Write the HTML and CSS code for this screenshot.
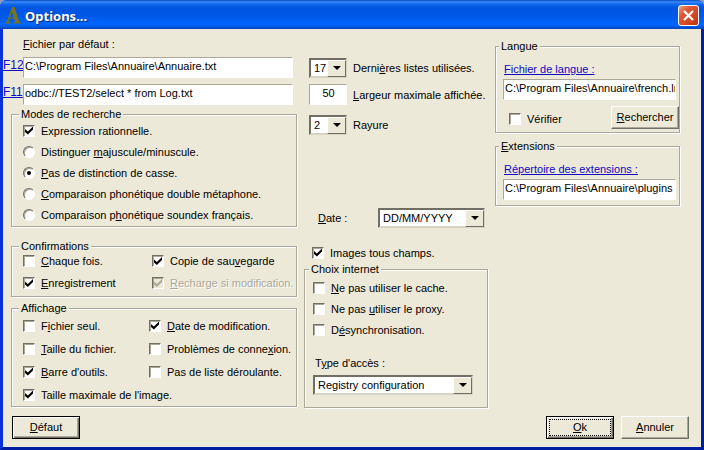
FILE: index.html
```html
<!DOCTYPE html>
<html lang="fr">
<head>
<meta charset="utf-8">
<title>Options...</title>
<link rel="stylesheet" href="styles.css">
</head>
<body>
<form class="window">
  <header class="titlebar">
    <svg class="logo" viewBox="0 0 16 17" aria-hidden="true">
      <path fill="#77731c" fill-rule="evenodd" d="M7 0h2.500l4.500 14c.3 1 .8 1.500 2 1.500v1H8.500v-1c1.300 0 1.600-.4 1.300-1.500L9 11.500H4.600L4 13.600c-.3 1.200.2 1.900 1.600 1.900v1H0v-1c1.300-.2 1.900-.8 2.400-2.200zM6.800 4.500l-1.800 6h3.700z"/>
    </svg>
    <h1 class="title">Options...</h1>
    <button class="close" type="button" aria-label="Fermer">
      <svg viewBox="0 0 13 13" aria-hidden="true"><path d="M2 2l9 9M11 2l-9 9" stroke="#fff" stroke-width="2.200"/></svg>
    </button>
  </header>

  <main class="columns">
    <section class="col-left">
      <label class="file-label" for="f12"><u>F</u>ichier par défaut :</label>
      <div class="file-row"><a class="key" href="#f12">F12</a><input class="field" id="f12" type="text" value="C:\Program Files\Annuaire\Annuaire.txt"></div>
      <div class="file-row"><a class="key" href="#f11">F11</a><input class="field" id="f11" type="text" aria-label="Source F11" value="odbc://TEST2/select * from Log.txt"></div>

      <fieldset class="group modes">
        <legend>Modes de recherche</legend>
        <label class="option"><input type="checkbox" checked><span>Expression rationnelle.</span></label>
        <label class="option"><input type="radio" name="mode"><span>Distinguer <u>m</u>ajuscule/minuscule.</span></label>
        <label class="option"><input type="radio" name="mode" checked><span><u>P</u>as de distinction de casse.</span></label>
        <label class="option"><input type="radio" name="mode"><span><u>C</u>omparaison phonétique double métaphone.</span></label>
        <label class="option"><input type="radio" name="mode"><span>Comparaison p<u>h</u>onétique soundex français.</span></label>
      </fieldset>

      <fieldset class="group confirmations">
        <legend>Confirmations</legend>
        <div class="pair">
          <label class="option"><input type="checkbox"><span><u>C</u>haque fois.</span></label>
          <label class="option"><input type="checkbox" checked><span>Copie de sau<u>v</u>egarde</span></label>
          <label class="option"><input type="checkbox" checked><span><u>E</u>nregistrement</span></label>
          <label class="option disabled"><input type="checkbox" checked disabled><span><u>R</u>echarge si modification.</span></label>
        </div>
      </fieldset>

      <fieldset class="group display">
        <legend>Affichage</legend>
        <div class="pair">
          <label class="option"><input type="checkbox"><span>F<u>i</u>chier seul.</span></label>
          <label class="option"><input type="checkbox" checked><span><u>D</u>ate de modification.</span></label>
          <label class="option"><input type="checkbox"><span><u>T</u>aille du fichier.</span></label>
          <label class="option"><input type="checkbox"><span>Problèmes de conne<u>x</u>ion.</span></label>
          <label class="option"><input type="checkbox" checked><span><u>B</u>arre d'outils.</span></label>
          <label class="option"><input type="checkbox"><span>Pas de liste déroulante.</span></label>
          <label class="option"><input type="checkbox" checked><span>Taille maximale de l'image.</span></label>
        </div>
      </fieldset>
    </section>

    <section class="col-middle">
      <div class="setting"><span class="drop"><select id="lists"><option>17</option></select></span><label for="lists">Derni<u>è</u>res listes utilisées.</label></div>
      <div class="setting"><input class="field number" id="width" type="text" value="50"><label for="width"><u>L</u>argeur maximale affichée.</label></div>
      <div class="setting stripe"><span class="drop"><select id="stripe"><option>2</option></select></span><label for="stripe">Rayure</label></div>

      <div class="date"><label for="date"><u>D</u>ate :</label><span class="drop"><select id="date"><option>DD/MM/YYYY</option></select></span></div>
      <label class="option images"><input type="checkbox" checked><span>Images tous champs.</span></label>

      <fieldset class="group internet">
        <legend>Choix internet</legend>
        <label class="option"><input type="checkbox"><span><u>N</u>e pas utiliser le cache.</span></label>
        <label class="option"><input type="checkbox"><span>Ne pas <u>u</u>tiliser le proxy.</span></label>
        <label class="option"><input type="checkbox"><span>D<u>é</u>synchronisation.</span></label>
        <label class="access" for="access">T<u>y</u>pe d'accès :</label>
        <span class="drop"><select id="access"><option>Registry configuration</option></select></span>
      </fieldset>
    </section>

    <section class="col-right">
      <fieldset class="group path language">
        <legend>Langue</legend>
        <a class="path-link" href="#lang">Fichier de langue :</a>
        <input class="field" id="lang" type="text" aria-label="Fichier de langue" value="C:\Program Files\Annuaire\french.lng">
        <div class="verify">
          <label class="option"><input type="checkbox"><span>Vérifier</span></label>
          <button class="button" type="button"><span><u>R</u>echercher</span></button>
        </div>
      </fieldset>
      <fieldset class="group path">
        <legend><u>E</u>xtensions</legend>
        <a class="path-link" href="#ext">Répertoire des extensions :</a>
        <input class="field" id="ext" type="text" aria-label="Répertoire des extensions" value="C:\Program Files\Annuaire\plugins">
      </fieldset>
    </section>
  </main>

  <footer class="actions">
    <button class="button framed reset" type="button"><span><u>D</u>éfaut</span></button>
    <button class="button framed focused" type="button"><span><u>O</u>k</span></button>
    <button class="button" type="button"><span><u>A</u>nnuler</span></button>
  </footer>
</form>
</body>
</html>
```
FILE: styles.css
```css
:root {
  --face: #ece9d8;
  --shade: #aca899;
  --dark: #716f64;
  --link: #1008c0;
}

* { box-sizing: border-box; }

body {
  margin: 0;
  background: #8f9cc0;
  color: #000;
  font: 11px/14px "Liberation Sans", Arial, sans-serif;
}

input, select, button { font: inherit; color: inherit; margin: 0; }
label, legend, a { white-space: nowrap; }

.window {
  display: flex;
  flex-direction: column;
  min-height: 100vh;
  border: 3px solid #0831d9;
  border-top: 0;
  border-right-color: #001ea0;
  border-bottom-color: #001ea0;
  border-radius: 7px 7px 0 0;
  background: var(--face);
}

/* Title bar */
.titlebar {
  display: flex;
  align-items: center;
  height: 29px;
  margin: 0 -3px;
  padding: 2px 5px 0;
  border-radius: 7px 7px 0 0;
  background: linear-gradient(#0a48c8 0, #3a8cf8 2px, #1268f0 4px, #0054e0 8px, #0058e8 16px, #0066fc 24px, #0060f0 26px, #0040b8 29px);
}
.logo { width: 16px; height: 17px; }
.title {
  flex: 1;
  margin: 0 0 0 4px;
  color: #fff;
  font: bold 13px/18px "Noto Sans", "Open Sans", sans-serif;
  text-shadow: 1px 1px 0 #0a2a80;
}
.close {
  display: grid;
  place-items: center;
  width: 21px;
  height: 21px;
  padding: 0;
  border: 1px solid #fff;
  border-radius: 3px;
  background: linear-gradient(135deg, #f0a088 0, #e0583a 30%, #d0421c 75%, #b83410 100%);
}
.close svg { width: 13px; height: 13px; }

/* Columns */
.columns {
  display: grid;
  grid-template-columns: 294fr 184fr 185fr;
  column-gap: 7px;
  flex: 1;
  padding-right: 21px;
}

/* Groups */
.group {
  min-width: 0;
  margin: 0;
  padding: 0 0 0 11px;
  border: 1px solid var(--shade);
  box-shadow: 1px 1px 0 #fff, inset 1px 1px 0 #fff;
}
.group legend {
  margin-left: -4px;
  padding: 0 2px;
  background: var(--face);
  line-height: 12px;
}

/* Check boxes and radios */
.option {
  display: flex;
  align-items: center;
  gap: 6px;
  height: 21px;
}
.option input {
  appearance: none;
  display: grid;
  place-items: center;
  flex: none;
  width: 12px;
  height: 12px;
  border: 1px solid;
  border-color: var(--dark) #fff #fff var(--dark);
  background: #fff;
  box-shadow: inset 1px 1px 0 var(--shade);
}
.option input[type="radio"] { border-radius: 50%; }
.option input[type="checkbox"]:checked::before {
  content: "";
  width: 8px;
  height: 8px;
  background: #000;
  clip-path: polygon(0 30%, 36% 62%, 100% 0, 100% 38%, 36% 100%, 0 68%);
}
.option input[type="radio"]:checked::before {
  content: "";
  width: 4px;
  height: 4px;
  border-radius: 50%;
  background: #000;
}
.disabled { color: var(--shade); text-shadow: 1px 1px 0 #fff; }
.option input:disabled { background: var(--face); }
.option input[type="checkbox"]:disabled::before { background: var(--shade); }

/* Text boxes */
.field {
  width: 100%;
  min-width: 0;
  height: 21px;
  padding: 0 0 3px 1px;
  border: 1px solid;
  border-color: var(--shade) #fff #fff var(--shade);
  border-radius: 0;
  background: #fff;
}

/* Drop-downs */
.drop { display: block; position: relative; height: 20px; }
.drop select {
  appearance: none;
  display: block;
  width: 100%;
  height: 100%;
  padding: 0 18px 0 3px;
  border: 2px solid;
  border-color: var(--dark) #d8d4c4 #d8d4c4 var(--dark);
  border-radius: 0;
  background: #fff;
}
.drop::before {
  content: "";
  position: absolute;
  top: 2px;
  right: 1px;
  bottom: 1px;
  width: 17px;
  border: 1px solid;
  border-color: #fff var(--dark) var(--dark) #fff;
  background: var(--face);
  pointer-events: none;
}
.drop::after {
  content: "";
  position: absolute;
  top: 8px;
  right: 6px;
  border: 4px solid transparent;
  border-top-color: #000;
  border-bottom: 0;
  pointer-events: none;
}

/* Left column */
.col-left { padding-top: 8px; }
.col-left .group { margin-left: 8px; }
.file-label { display: block; margin: 0 0 6px 20px; }
.file-row {
  display: grid;
  grid-template-columns: 20px 1fr;
  margin-bottom: 6px;
  padding-right: 4px;
}
.key { color: var(--link); font-size: 12px; line-height: 16px; }
.col-left .modes { margin-top: -3px; padding-bottom: 1px; }
.confirmations { margin-top: 13px; }
.display { margin-top: 5px; }
.pair { display: grid; grid-template-columns: 129px 1fr; }
.confirmations .option { height: 22px; }
.confirmations .pair { margin-top: -2px; padding-bottom: 2px; }
.display .pair { grid-template-columns: 126px 1fr; }
.display .option { height: 23px; }

/* Middle column */
.col-middle { display: flex; flex-direction: column; padding-top: 28px; }
.setting {
  display: grid;
  grid-template-columns: 38px 1fr;
  column-gap: 6px;
  align-items: center;
  height: 21px;
  margin: 0 0 6px 5px;
}
.number { text-align: center; }
.setting.stripe { margin-top: 3px; }
.date {
  display: grid;
  grid-template-columns: 60px 1fr;
  align-items: center;
  margin: auto 3px 0 14px;
}
.images { margin: 14px 0 0 8px; }
.internet { padding: 2px 14px 12px 8px; }
.access { display: block; margin: 16px 0 5px 2px; }

/* Right column */
.col-right { padding-top: 11px; }
.path { padding: 10px 3px 5px 7px; }
.path-link { display: block; margin: 0 0 3px 1px; color: var(--link); }
.language { margin-bottom: 7px; padding-bottom: 3px; }
.verify {
  display: flex;
  align-items: flex-end;
  justify-content: space-between;
  margin: 6px -3px 0 6px;
}

/* Buttons */
.button {
  width: 68px;
  height: 23px;
  padding: 1px;
  border: 1px solid;
  border-color: #fff var(--dark) var(--dark) #fff;
  border-radius: 0;
  background: var(--face);
  box-shadow: inset -1px -1px 0 var(--shade);
}
.button span { display: block; line-height: 17px; }
.framed {
  border-color: #000;
  box-shadow: inset 1px 1px 0 #fff, inset -1px -1px 0 var(--dark), inset -2px -2px 0 var(--shade);
}
.focused { padding: 2px; }
.focused span { border: 1px dotted #000; line-height: 15px; }

.actions {
  display: flex;
  gap: 7px;
  padding: 8px 12px 8px 9px;
}
.actions .button { height: 23px; }
.reset { margin-right: auto; }
```
